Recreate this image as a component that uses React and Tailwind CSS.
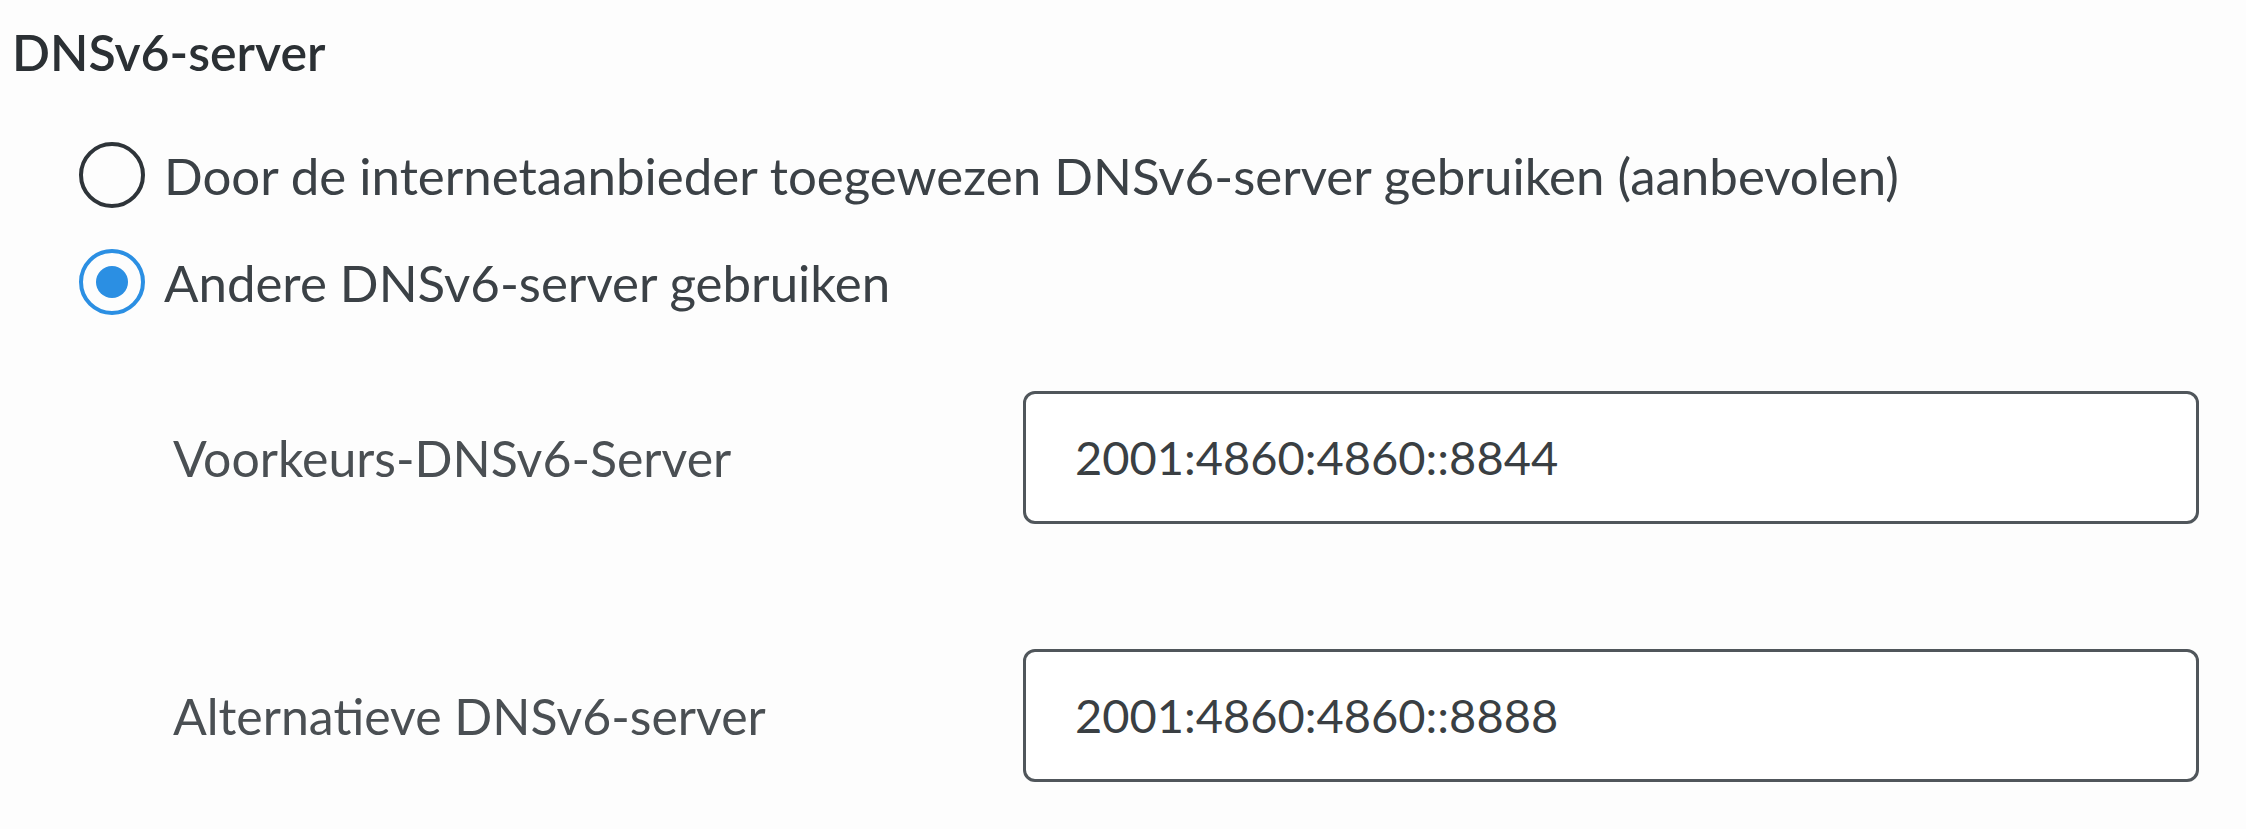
import React, { useState } from 'react';

const font = { fontFamily: 'Lato, "Open Sans", sans-serif' };

function Radio({ checked, label, onSelect }) {
  return (
    <label className="flex items-center h-[80px] cursor-pointer" onClick={onSelect}>
      <span
        className={
          checked
            ? 'w-[66px] h-[66px] rounded-full border-[4px] border-[#2b8fe3] flex items-center justify-center shrink-0'
            : 'w-[66px] h-[66px] rounded-full border-[4px] border-[#2e3439] flex items-center justify-center shrink-0'
        }
      >
        {checked && <span className="w-[32px] h-[32px] rounded-full bg-[#2b8fe3]"></span>}
      </span>
      <span className="ml-[19px] text-[51px] text-[#3b4146] leading-none">{label}</span>
    </label>
  );
}

function DnsRow({ label, value }) {
  return (
    <div className="flex items-center h-[133px]">
      <div className="w-[1023px] shrink-0 pl-[173px] text-[50px] text-[#4a4f53] leading-none">{label}</div>
      <div className="w-[1176px] h-[133px] rounded-[12px] border-[3px] border-[#50565b] bg-white flex items-center pl-[49px]">
        <span className="text-[47px] text-[#3a3f43] leading-none">{value}</span>
      </div>
    </div>
  );
}

export default function App() {
  const [mode, setMode] = useState('custom');

  return (
    <div className="min-h-screen w-[2246px] h-[829px] bg-[#fdfdfd] overflow-hidden" style={font}>
      <div className="pt-[20px] h-[84px] flex items-center pl-[12px]">
        <h2 className="text-[50px] font-semibold text-[#2b3034] leading-none">DNSv6-server</h2>
      </div>

      <div className="mt-[51px] pl-[79px] flex flex-col gap-[27px]">
        <Radio
          checked={mode === 'isp'}
          label="Door de internetaanbieder toegewezen DNSv6-server gebruiken (aanbevolen)"
          onSelect={() => setMode('isp')}
        />
        <Radio
          checked={mode === 'custom'}
          label="Andere DNSv6-server gebruiken"
          onSelect={() => setMode('custom')}
        />
      </div>

      <div className="mt-[69px] flex flex-col gap-[125px]">
        <DnsRow label="Voorkeurs-DNSv6-Server" value="2001:4860:4860::8844" />
        <DnsRow label="Alternatieve DNSv6-server" value="2001:4860:4860::8888" />
      </div>
    </div>
  );
}
